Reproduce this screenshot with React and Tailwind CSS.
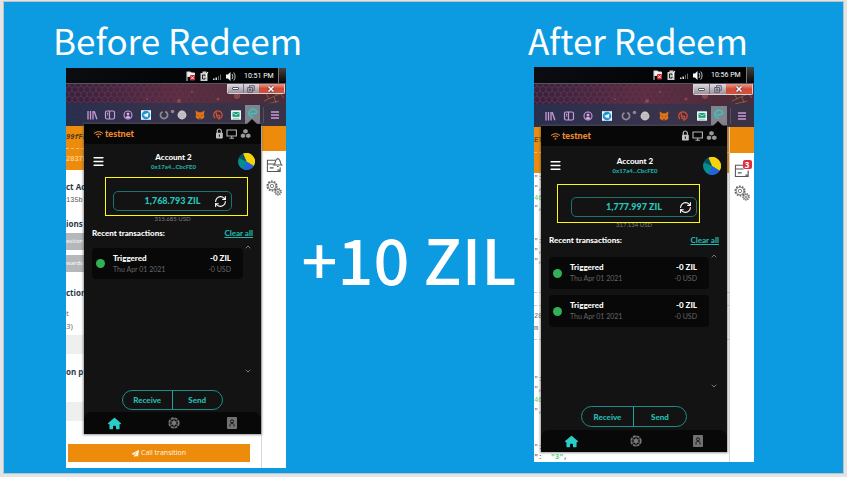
import React from "react";
import { FaWifi, FaHouse, FaPaperPlane } from "react-icons/fa6";
import { RefreshCcw, Menu, ChevronUp, ChevronDown } from "lucide-react";

const before = {
  time: "10:51 PM",
  balance: "1,768.793 ZIL",
  usd: "315.685 USD",
  transactions: [1],
  taskbar: "h-[15px] pr-[14px]",
  frame: "h-[19px]",
  controls: "w-[58px] h-[10px]",
  toolbar: "h-[23px] pl-[17px] pr-[6px]",
  slot: "w-[18px]",
  active: "w-[15px] h-[19px]",
  popup: "left-[18px] top-[56px] w-[177px]",
  notch: "right-[4px]",
  account: "mt-[8px]",
  pie: "size-[17px]",
  pill: "mt-[20px] mx-[29px]",
  highlight: "left-[-9px] top-[-15px] w-[143px] h-[39px]",
  usdGap: "mt-[3px]",
  recent: "mt-[3px]",
  list: "mt-[4px] h-[132px]",
  card: "h-[31px]",
  actions: "mt-[15px] w-[101px] h-[20px]",
  footer: "mt-[2px]",
};

const after = {
  time: "10:56 PM",
  balance: "1,777.997 ZIL",
  usd: "317.134 USD",
  transactions: [1, 2],
  taskbar: "h-[16px] pr-[15px]",
  frame: "h-[20px]",
  controls: "w-[60px] h-[11px]",
  toolbar: "h-[23px] pl-[6px] pr-[7px]",
  slot: "w-[19px]",
  active: "w-[16px] h-[19px]",
  popup: "left-[7px] top-[59px] w-[186px]",
  notch: "right-[4px]",
  account: "mt-[10px]",
  pie: "size-[18px]",
  pill: "mt-[22px] mx-[30px]",
  highlight: "left-[-15px] top-[-14px] w-[143px] h-[39px]",
  usdGap: "mt-[3px]",
  recent: "mt-[4px]",
  list: "mt-[6px] h-[138px]",
  card: "h-[32px]",
  actions: "mt-[16px] w-[106px] h-[21px]",
  footer: "mt-[3px]",
};

function TrayIcons() {
  return (
    <svg viewBox="0 0 50 12" className="h-[12px] w-[50px]">
      <path d="M1 1.500V11M1.500 2h3l1 1h3v4.500h-4l-1-1h-2z" fill="#f2f2f2" stroke="#ddd" strokeWidth="1" />
      <rect x="4" y="5" width="5" height="5.500" rx="1" fill="#d3222a" />
      <path d="M5.200 6.400l2.600 2.800M7.800 6.400L5.200 9.200" stroke="#fff" strokeWidth="0.900" />
      <path d="M14.500 3h2V1.500h4V3h1v8h-7z" fill="#cfcfcf" />
      <path d="M16.500 5h2.500v4h-2.500z" fill="none" stroke="#222" strokeWidth="1" />
      <path d="M18 7h2.500V4l1.500-2" stroke="#fff" fill="none" />
      <path d="M27 10V8.500h1.500V10zM29.500 10V7.500H31V10z" fill="#ddd" />
      <path d="M32 10V6h1v4zM34 10V4.500h1V10z" fill="#666" />
      <path d="M40 4.500h2L44.500 2v9L42 8.500h-2z" fill="#f5f5f5" />
      <path d="M46 4c1 1 1 4 0 5M47.700 2.500c1.800 2 1.800 6 0 8" fill="none" stroke="#ddd" strokeWidth="0.900" />
    </svg>
  );
}

function WindowControls({ size }) {
  return (
    <div className={`relative flex overflow-hidden rounded-b-[2px] border border-t-0 border-[#d9d0d5] ${size}`}>
      <button aria-label="Minimize" className="flex w-[28%] items-center justify-center border-r border-[#77707c] bg-linear-to-b from-[#dfdbe0] to-[#9a929e]">
        <span className="h-[3px] w-[7px] rounded-[1px] border border-[#565365] bg-white" />
      </button>
      <button aria-label="Restore" className="flex w-[27%] items-center justify-center bg-linear-to-b from-[#dfdbe0] to-[#9a929e]">
        <svg viewBox="0 0 8 8" className="size-[8px]">
          <path d="M2.500 2V.7h4.800v4.600H6M.7 2.500h4.800v4.800H.7zM2.500 4h1.300v1.500H2.500z" fill="none" stroke="#565365" strokeWidth="0.900" />
        </svg>
      </button>
      <button aria-label="Close" className="flex flex-1 items-center justify-center bg-linear-to-b from-[#e79a8d] via-[#cf4a35] to-[#d0553d]">
        <svg viewBox="0 0 8 8" className="size-[8px]">
          <path d="M1.500 1.500l5 5M6.500 1.500l-5 5" stroke="#5b3340" strokeWidth="2.800" />
          <path d="M1.500 1.500l5 5M6.500 1.500l-5 5" stroke="#fff" strokeWidth="1.600" />
        </svg>
      </button>
    </div>
  );
}

const extensionIcons = [
  <g key="library" fill="none" stroke="#c99bd6" strokeWidth="1.300"><path d="M2 2v8.500M4.500 2v8.500M7 2v8.500M8.200 2.200l2.700 8" /></g>,
  <g key="sidebar" fill="none" stroke="#c99bd6" strokeWidth="1.200"><rect x="1.500" y="2" width="9" height="8" rx="1.500" /><path d="M5.500 2v8M3 4.300h1.200M3 6h1.200" /></g>,
  <g key="profile"><circle cx="6" cy="6" r="4" fill="none" stroke="#c99bd6" strokeWidth="1.100" /><circle cx="6" cy="5" r="1.500" fill="#d7a8e3" /><path d="M3.300 8.500c1-2 4.400-2 5.400 0L6 9.800z" fill="#d7a8e3" /></g>,
  <g key="telegram"><rect x="1" y="1.200" width="10" height="9.600" fill="#eef6fa" /><circle cx="6" cy="6" r="4.300" fill="#1c95d4" /><path d="M3 6l5.500-2.300-.9 4.800-1.700-1.200-.9.900-.3-1.500z" fill="#fff" /></g>,
  <g key="ring"><path d="M7.300 2.600a3.600 3.600 0 1 1-2.800.1" fill="none" stroke="#8d8d91" strokeWidth="1.700" /></g>,
  <g key="globe"><circle cx="6" cy="6" r="4.400" fill="#d3d0d2" /><path d="M2 4.500h8M1.600 6.300h8.800M2.300 8.200h7.400M4.200 2v8M6 1.600v8.800M7.900 2v8" stroke="#a9a6ab" strokeWidth="0.500" /></g>,
  <g key="fox"><path d="M1.500 1.500l3.200 1.700h2.600l3.200-1.700-.6 4.200.5 2.800-2.600 1.800H4.200L1.600 8.500l.5-2.800z" fill="#e0721c" /><path d="M3.300 5.500l1.600.8-.4.700zM8.700 5.500l-1.600.8.400.7zM5 8.800h2l-.4 1H5.400z" fill="#47301f" /></g>,
  <g key="bitly" fill="none" stroke="#d9512c" strokeWidth="1.200"><path d="M3 9a4.200 4.200 0 1 1 3 1.200" /><path d="M4 3.200l1 4.800c1.200 1.300 2.900.5 2.700-.9-.2-1.300-1.900-1.400-2.700-.4" /></g>,
  <g key="mail"><rect x="1" y="1.300" width="10" height="9.500" rx="0.500" fill="#e8f5ef" /><rect x="2.500" y="3" width="7" height="4.800" fill="#1a9c7b" /><path d="M2.500 3.500L6 6l3.500-2.500" stroke="#dff" strokeWidth="0.700" fill="none" /><path d="M3 9.300h6" stroke="#6bbca3" strokeWidth="0.700" /></g>,
];

function Toolbar({ shot }) {
  return (
    <div className={`relative flex items-center ${shot.toolbar}`}>
      {extensionIcons.map((icon, i) => (
        <button key={i} aria-label={`Extension ${i + 1}`} className={`flex shrink-0 justify-center ${shot.slot}`}>
          <svg viewBox="0 0 12 12" className="size-[12px] overflow-visible">
            {icon}
            {i === 4 && <circle cx="14.500" cy="2.500" r="1.800" fill="#ae8494" opacity="0.900" />}
          </svg>
        </button>
      ))}
      <button aria-label="Wallet" className={`flex shrink-0 items-start justify-center bg-[#85828c] pt-[2px] ${shot.active}`}>
        <svg viewBox="0 0 12 12" className="size-[12px]">
          <path d="M4.300 6.700C7 7.200 10 6.500 9.800 4.600 9.300 2 5 1.300 2.900 3.700 1 6.200 2.300 9.800 5.500 10" fill="none" stroke="#35c4bd" strokeWidth="1.700" strokeLinecap="round" />
        </svg>
      </button>
      <span className="ml-auto h-[16px] w-px bg-[#55505f]" />
      <button aria-label="Menu" className="ml-[6px]">
        <svg viewBox="0 0 10 10" className="size-[10px]">
          <path d="M1 2h8M1 5h8M1 8h8" stroke="#c99bd6" strokeWidth="1.300" />
        </svg>
      </button>
    </div>
  );
}

function BrowserChrome({ shot, id }) {
  return (
    <header>
      <div className={`relative flex items-center justify-end gap-[8px] bg-linear-to-r from-[#0c0d10] to-[#010203] ${shot.taskbar}`}>
        <TrayIcons />
        <time className="w-[28px] font-[Roboto,sans-serif] text-[7px] leading-[8px] whitespace-nowrap text-white">{shot.time}</time>
        <span className="absolute inset-y-0 right-0 w-[8px] border-l border-[#777] bg-linear-to-b from-[#444] to-[#080808]" />
      </div>
      <div className="relative border-t border-[#5a5460] bg-linear-to-r from-[#38203c] via-[#5b2c42] to-[#4b2c38]">
        <svg className="absolute inset-0 size-full" aria-hidden="true">
          <defs>
            <pattern id={`hex-${id}`} width="6" height="10" patternUnits="userSpaceOnUse">
              <path d="M3 0v2L0 4v3l3 2v1M3 2l3 2v3L3 9" fill="none" stroke="#8d5c7c" strokeWidth="0.600" />
            </pattern>
            <linearGradient id={`fade-${id}`}>
              <stop offset="0" stopColor="#fff" stopOpacity="0.600" />
              <stop offset="0.600" stopColor="#fff" stopOpacity="0.200" />
              <stop offset="0.800" stopColor="#fff" stopOpacity="0" />
            </linearGradient>
            <mask id={`mask-${id}`}><rect width="100%" height="100%" fill={`url(#fade-${id})`} /></mask>
          </defs>
          <rect width="100%" height="100%" fill={`url(#hex-${id})`} mask={`url(#mask-${id})`} />
          <g fill="#c06a62" opacity="0.450">
            <circle cx="81" cy="15" r="1" /><circle cx="113" cy="17" r="2" /><circle cx="171" cy="12" r="3" /><circle cx="126" cy="8" r="1" /><circle cx="152" cy="15" r="1.500" />
          </g>
          <path d="M198 17l20-9M203 15l-3-6M208 13l2 6M210 11l-2-5M214 9l4 5M201 20l12-3" stroke="#a27850" strokeWidth="0.900" opacity="0.700" fill="none" />
        </svg>
        <div className={`flex justify-end pr-[1px] ${shot.frame}`}>
          <WindowControls size={shot.controls} />
        </div>
        <div className="relative bg-linear-to-r from-[#26304fdd] via-[#32334edd] to-[#383447dd]">
          <Toolbar shot={shot} />
        </div>
      </div>
    </header>
  );
}

function Pie({ size }) {
  return (
    <svg viewBox="0 0 20 20" className={`justify-self-end ${size}`}>
      <circle cx="10" cy="10" r="10" fill="#078c92" />
      <path d="M10 10L6 .8A10 10 0 0 1 18.500 15.200z" fill="#f9d207" />
      <path d="M10 10l8.500 5.200A10 10 0 0 1 6.500 19.400z" fill="#2461e0" />
      <path d="M10 10L6 .8A10 10 0 0 0 .8 6.200z" fill="#07535d" />
    </svg>
  );
}

function Transaction({ height }) {
  return (
    <li className={`flex items-center rounded-[4px] bg-[#080808] pr-[12px] pl-[4px] ${height}`}>
      <span className="size-[9px] rounded-full bg-[#32b058]" />
      <div className="ml-[8px] leading-[11px]">
        <p className="text-[8px] font-black text-white">Triggered</p>
        <p className="text-[7px] text-[#656565]">Thu Apr 01 2021</p>
      </div>
      <div className="ml-auto text-right leading-[11px]">
        <p className="text-[8px] font-black text-white">-0 ZIL</p>
        <p className="text-[7px] text-[#656565]">-0 USD</p>
      </div>
    </li>
  );
}

function WalletPopup({ shot }) {
  return (
    <section className={`absolute bg-[#131313] font-[Lato,sans-serif] text-white shadow-[0_0_2px_1px_rgba(90,90,90,0.6)] ${shot.popup}`}>
      <svg viewBox="0 0 10 5" className={`absolute -top-[5px] h-[5px] w-[10px] ${shot.notch}`}>
        <path d="M0 5l5-5 5 5z" fill="#080808" />
      </svg>
      <header className="flex h-[20px] items-center bg-[#070707] pr-[10px] pl-[10px]">
        <FaWifi className="size-[9px] text-[#e8862e]" />
        <span className="ml-[2px] text-[9px] leading-[10px] font-black text-[#ee8b33]">testnet</span>
        <svg viewBox="0 0 36 12" className="ml-auto h-[12px] w-[36px]" aria-hidden="true">
          <path d="M2.300 5V3a2 2 0 0 1 4 0v2" fill="none" stroke="#b9b9b9" strokeWidth="1.200" />
          <rect x="1" y="4.800" width="6.800" height="5.700" rx="0.700" fill="#c2c2c2" />
          <path d="M4.400 6.500v2.200" stroke="#222" strokeWidth="1.200" />
          <path d="M12 2h9.400v6H12zM16.700 8v2M14.500 10.200h4.500" fill="none" stroke="#b4b4b4" strokeWidth="1.100" />
          <g fill="#999"><path d="M30.500 1l2.200 1v2.500l-2.200 1-2.200-1V2zM28 5.500l2.200 1V9L28 10l-2.200-1V6.500zM33.300 5.500l2.200 1V9l-2.200 1-2.200-1V6.500z" /></g>
        </svg>
      </header>

      <div className={`grid grid-cols-[1fr_auto_1fr] items-center pr-[6px] pl-[8px] ${shot.account}`}>
        <button aria-label="Open menu" className="w-[12px]">
          <Menu className="size-[13px]" strokeWidth={3} />
        </button>
        <div className="text-center">
          <h2 className="text-[8px] leading-[11px] font-black">Account 2</h2>
          <p className="text-[6px] leading-[8px] font-black text-[#20aaa4]">0x17a4...CbcFE0</p>
        </div>
        <Pie size={shot.pie} />
      </div>

      <div className={`relative grid h-[20px] grid-cols-[1fr_auto_1fr] items-center rounded-[5px] border border-[#1b7471] pr-[4px] pl-[4px] ${shot.pill}`}>
        <span className="col-start-2 text-[9px] leading-[12px] font-black text-[#27c7be]">{shot.balance}</span>
        <button aria-label="Refresh balance" className="justify-self-end">
          <RefreshCcw className="size-[13px] -scale-x-100" strokeWidth={2} />
        </button>
        <span className={`pointer-events-none absolute border border-[#fffb00] ${shot.highlight}`} />
      </div>
      <p className={`text-center text-[6px] leading-[10px] text-[#7d7d7d] ${shot.usdGap}`}>{shot.usd}</p>

      <div className={`flex justify-between pr-[8px] pl-[8px] text-[8px] leading-[12px] font-black ${shot.recent}`}>
        <h3>Recent transactions:</h3>
        <a href="#clear" className="text-[#21b5ad] underline">Clear all</a>
      </div>

      <div className={`flex pr-[8px] pl-[8px] ${shot.list}`}>
        <ul className="flex flex-1 flex-col gap-[6px] pt-[5px]">
          {shot.transactions.map((t) => <Transaction key={t} height={shot.card} />)}
        </ul>
        <div className="flex w-[10px] flex-col items-center justify-between text-[#777]">
          <ChevronUp className="size-[8px]" strokeWidth={3} />
          <ChevronDown className="size-[8px]" strokeWidth={3} />
        </div>
      </div>

      <div className={`mx-auto grid grid-cols-2 rounded-full border border-[#1b8f8a] text-[8px] font-black text-[#26bdb5] ${shot.actions}`}>
        <button className="border-r border-[#1fa59f]">Receive</button>
        <button>Send</button>
      </div>

      <nav className={`flex h-[22px] items-center justify-between rounded-t-[8px] bg-[#080808] pr-[24px] pl-[24px] ${shot.footer}`}>
        <button aria-label="Home"><FaHouse className="size-[13px] text-[#2bccc6]" /></button>
        <button aria-label="Tokens">
          <svg viewBox="0 0 14 14" className="size-[12px]">
            <circle cx="7" cy="7" r="5.700" fill="none" stroke="#777" strokeWidth="1.800" strokeDasharray="3.500 0.976" />
            <circle cx="7" cy="7" r="4.700" fill="none" stroke="#777" strokeWidth="0.700" />
            <path d="M7 2.800l1.200 2.100h2.400L9.400 7l1.200 2.100H8.200L7 11.200 5.800 9.100H3.400L4.600 7 3.400 4.900h2.400z" fill="#777" />
          </svg>
        </button>
        <button aria-label="Contacts">
          <svg viewBox="0 0 10 12" className="h-[12px] w-[10px]">
            <rect width="10" height="12" rx="1" fill="#727272" />
            <path d="M3 9.500V7.800c0-1 .8-1.300 2-1.300s2 .3 2 1.300v1.700" fill="none" stroke="#181818" strokeWidth="1" />
            <circle cx="5" cy="4.300" r="1.500" fill="none" stroke="#181818" strokeWidth="1" />
          </svg>
        </button>
      </nav>
    </section>
  );
}

function Gears() {
  return (
    <svg viewBox="0 0 16 16" className="size-[16px]" fill="none" stroke="#666">
      <circle cx="6" cy="6" r="4.800" strokeWidth="1.500" strokeDasharray="1.700 1.300" />
      <circle cx="6" cy="6" r="3.900" strokeWidth="0.800" />
      <circle cx="6" cy="6" r="1.700" strokeWidth="0.800" />
      <circle cx="12" cy="11.800" r="3.200" strokeWidth="1.300" strokeDasharray="1.200 1" />
      <circle cx="12" cy="11.800" r="2.400" strokeWidth="0.800" />
      <circle cx="12" cy="11.800" r="0.800" strokeWidth="0.800" />
    </svg>
  );
}

function SideRail({ badge, top, gap }) {
  return (
    <aside className="flex w-[25px] shrink-0 flex-col items-center border-l border-[#d8d8d8]">
      <div className={`w-full bg-[#ed8c0c] ${top}`} />
      <div className={`relative ${gap}`}>
        <svg viewBox="0 0 18 18" className="size-[17px]" fill="none" stroke="#555">
          <path d="M10 4.500H1.500v12H15V12M1.500 8.500H10" strokeWidth="1.100" />
          <path d="M4 12.500h4M12 15h3" strokeWidth="1.300" />
          {badge
            ? <path d="M15 10v3" strokeWidth="1.100" />
            : <path d="M8.500 9.500c1.500-1 .9-6.500 4-6.500s2.500 5.500 4 6.500zM11.700 11.200h1.600M12.500 3V1.800" strokeWidth="1.100" />}
        </svg>
        {badge && (
          <span className="absolute -top-[1px] -right-[1px] flex size-[9px] items-center justify-center rounded-[2px] bg-[#dc2e40] font-['Open_Sans',sans-serif] text-[8px] font-bold text-white">{badge}</span>
        )}
      </div>
      <div className="mt-[7px]"><Gears /></div>
    </aside>
  );
}

function BeforePage() {
  return (
    <div className="flex h-[342px] bg-white font-['Open_Sans',sans-serif] whitespace-nowrap text-[#27384a]">
      <div className="min-w-0 flex-1 overflow-hidden">
        <div className="bg-[#ed8c0c] font-['Liberation_Mono',monospace] text-[7px]">
          <p className="border-b border-dashed border-[#f6bd70] leading-[22px] font-bold text-[#4a3515] italic">99fFb</p>
          <p className="leading-[21px] text-[#ffe0b0]">2837b</p>
        </div>
        <p className="mt-[11px] text-[8px] leading-[12px] font-bold">ct Ac</p>
        <p className="font-['Liberation_Mono',monospace] text-[7px] leading-[14px] text-[#555]">135b</p>
        <p className="mt-[11px] text-[8px] leading-[12px] font-bold">ions</p>
        <p className="mt-[3px] bg-[#b4b8ba] text-[6px] leading-[17px] text-white">estion</p>
        <p className="mt-[5px] bg-[#b4b8ba] text-[6px] leading-[17px] text-white">wards</p>
        <p className="mt-[15px] text-[8px] leading-[12px] font-bold">ction</p>
        <p className="mt-[8px] text-[8px] leading-[12px] text-[#666]">t</p>
        <p className="text-[8px] leading-[13px] text-[#666]">3)</p>
        <div className="mt-[3px] h-[19px] bg-[#efefef]" />
        <p className="mt-[12px] text-[8px] leading-[12px] font-bold">on p</p>
        <div className="mt-[24px] h-[19px] bg-[#efefef]" />
        <button className="mt-[23px] mr-[11px] ml-[2px] flex h-[18px] w-[182px] items-center justify-center gap-[2px] bg-[#ed8c0c] text-[7px] text-[#fff4e0]">
          <FaPaperPlane className="size-[7px]" />
          Call transition
        </button>
      </div>
      <SideRail top="h-[25px]" gap="mt-[5px]" />
    </div>
  );
}

function AfterPage() {
  return (
    <div className="flex h-[335px] bg-white font-['Liberation_Mono',monospace] text-[7px] leading-[10px] whitespace-nowrap text-[#666]">
      <div className="min-w-0 flex-1 overflow-hidden">
        <div className="bg-[#ed8c0c] pt-px">
          <p className="border-b border-dashed border-[#f6bd70] leading-[24px] font-bold text-[#6a4715] italic">ET</p>
          <div className="h-[20px]" />
        </div>
        <p>":</p>
        <p>",</p>
        <p className="text-[#48d56c]">46</p>
        <p>",</p>
        <p className="mt-[23px]">":</p>
        <p>",</p>
        <p>",</p>
        <div className="mt-[26px] h-[14px] border-y border-dashed border-[#ccc]" />
        <p className="mt-[4px] leading-[12px]">28</p>
        <p className="border-b border-dashed border-[#ccc] pb-[5px] leading-[12px]">m</p>
        <p className="mt-[34px]">":</p>
        <p>",</p>
        <p className="leading-[12px] text-[#48d56c]">46</p>
        <p>",</p>
        <p className="mt-[26px]">":</p>
        <p className="font-bold">":&nbsp; <span className="text-[#48d56c]">"3"</span>,</p>
      </div>
      <SideRail badge="3" top="h-[26px]" gap="mt-[8px]" />
    </div>
  );
}

function Shot({ shot, id, children }) {
  return (
    <div className="relative w-[220px] overflow-hidden">
      <BrowserChrome shot={shot} id={id} />
      {children}
      <WalletPopup shot={shot} />
    </div>
  );
}

const titleClass = "font-['Noto_Sans_CJK_SC',sans-serif] text-[35px] leading-[44px] font-normal whitespace-nowrap text-white";

export default function App() {
  return (
    <div className="flex min-h-screen bg-[#e4e4e4] pt-px pr-[3px] pb-[3px] pl-[3px]">
      <main className="flex flex-1 items-start justify-between border border-[#b9c3c9] bg-[#0c9ae0] pr-[89px] pl-[49px]">
        <section className="w-[233px]">
          <h1 className={`pt-[16px] ${titleClass}`}>Before Redeem</h1>
          <div className="pt-[6px] pl-[13px]">
            <Shot shot={before} id="before"><BeforePage /></Shot>
          </div>
        </section>
        <p className="self-center pt-[40px] pl-[4px] font-['Noto_Sans_CJK_SC',sans-serif] text-[63px] leading-[70px] font-medium whitespace-nowrap text-white">+10 ZIL</p>
        <section className="w-[226px]">
          <h1 className={`pt-[16px] ${titleClass}`}>After Redeem</h1>
          <div className="pt-[5px] pl-[6px]">
            <Shot shot={after} id="after"><AfterPage /></Shot>
          </div>
        </section>
      </main>
    </div>
  );
}
